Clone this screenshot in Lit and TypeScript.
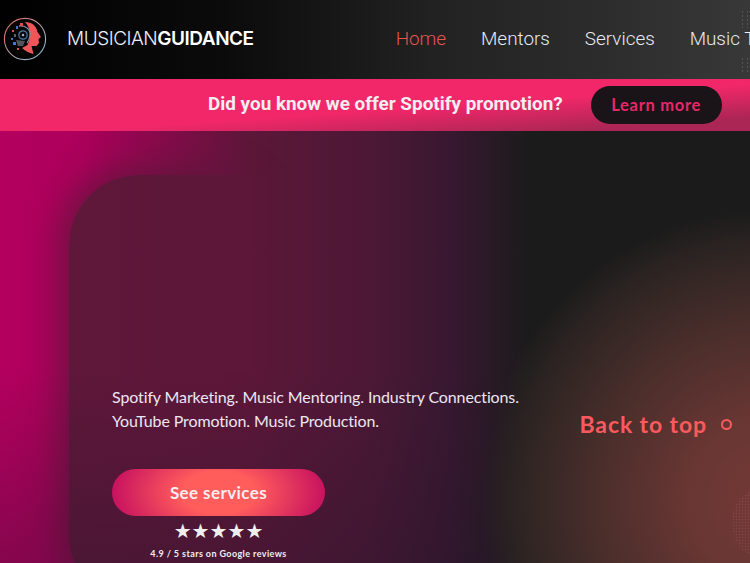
import {LitElement, html, css} from 'lit';
import {customElement} from 'lit/decorators.js';

const NAV = ['Home', 'Mentors', 'Services', 'Music Tools'];

@customElement('app-root')
export class AppRoot extends LitElement {
  static styles = css`
    :host {
      display: block;
      width: 750px;
      height: 563px;
      overflow: hidden;
      position: relative;
      background: #1b1b1b;
    }
    .header {
      position: relative;
      height: 77px;
      padding: 0 0 2px 3px;
      display: flex;
      align-items: center;
      white-space: nowrap;
      background: linear-gradient(90deg, #000 0%, #0b0b0b 30%, #222 58%, #2c2c2c 80%, #383838 100%);
    }
    .logo {
      width: 44px;
      height: 44px;
      flex: none;
    }
    .brand {
      margin-left: 20px;
      font: 300 19px 'Inter', sans-serif;
      letter-spacing: -0.48px;
      color: #e8eefc;
    }
    .brand b {
      font-weight: 600;
      color: #fff;
    }
    .nav {
      display: flex;
      gap: 34.9px;
      margin-left: 142px;
      font: 300 18.9px 'Roboto', sans-serif;
      color: #e6ebf5;
    }
    .nav .active {
      color: #e5564f;
    }
    .speck {
      position: absolute;
      left: 740px;
      width: 9px;
      opacity: 0.55;
      background-image: radial-gradient(circle, #6a6a6a 0.5px, transparent 0.9px);
      background-size: 5px 4px;
    }
    .speck.a {
      top: 10px;
      height: 18px;
    }
    .speck.b {
      top: 57px;
      height: 15px;
    }
    .banner {
      height: 52px;
      display: flex;
      align-items: center;
      padding-left: 208px;
      gap: 28px;
      white-space: nowrap;
      background: linear-gradient(176deg, #f2276a 55%, #ab2654 88%);
    }
    .banner-text {
      font: 700 18.9px 'Roboto', sans-serif;
      color: #f3eef0;
      margin-top: -3px;
    }
    .learn {
      width: 131px;
      height: 38px;
      margin-top: -1px;
      border-radius: 19px;
      display: flex;
      align-items: center;
      justify-content: center;
      background: #1a1419;
      color: #e8266a;
      font: 700 16.5px 'Lato', sans-serif;
      letter-spacing: 0.7px;
    }
    .hero {
      position: relative;
      height: 432px;
      overflow: hidden;
      background: linear-gradient(90deg, #b3005e 0, #ac005b 85px, #5c1739 250px, #4c1835 370px, #381830 450px, #1b1b1b 530px);
    }
    .shade {
      position: absolute;
      left: 69px;
      top: 44px;
      width: 200px;
      height: 430px;
      border-radius: 70px;
      box-shadow: -6px -4px 36px 2px rgba(92, 24, 58, 0.85);
    }
    .plum {
      position: absolute;
      left: 69px;
      top: 44px;
      width: 461px;
      height: 430px;
      border-radius: 70px;
      background: linear-gradient(90deg, #5f173a 0, #5c1739 181px, #4c1835 301px, #381830 381px, #1b1b1b 461px);
    }
    .fade {
      position: absolute;
      inset: 0;
      background: linear-gradient(180deg, transparent 55%, rgba(30, 20, 40, 0.3) 100%);
    }
    .glow {
      position: absolute;
      left: 470px;
      top: 69px;
      width: 600px;
      height: 600px;
      border-radius: 50%;
      background: radial-gradient(circle closest-side, #743936 0%, #683633 28%, #4a2e2b 58%, #2c2422 85%, rgba(27, 27, 27, 0) 97%);
    }
    .blob {
      position: absolute;
      left: 732px;
      top: 360px;
      width: 44px;
      height: 64px;
      border-radius: 50%;
      opacity: 0.6;
      background-image: radial-gradient(circle, #8a5058 0.7px, transparent 1.1px);
      background-size: 3px 3px;
    }
    .content {
      position: relative;
      padding: 254px 0 0 112px;
      width: 440px;
    }
    .lead {
      margin: 0;
      font: 400 16px/24px 'Lato', sans-serif;
      letter-spacing: -0.12px;
      color: #ece6f2;
    }
    .cta {
      width: 213px;
      height: 47px;
      margin-top: 36px;
      border-radius: 24px;
      display: flex;
      align-items: center;
      justify-content: center;
      background: radial-gradient(ellipse 50% 130% at 50% 50%, #ff5c5c 35%, #c8125f 100%);
      color: #f6eef0;
      font: 700 17px 'Lato', sans-serif;
      letter-spacing: 0.4px;
    }
    .rating {
      width: 213px;
      text-align: center;
      color: #efefef;
    }
    .stars {
      font: 400 20px/22px 'DejaVu Sans', sans-serif;
      margin-top: 4px;
    }
    .score {
      font: 700 9px/12px 'Lato', sans-serif;
      letter-spacing: 0.4px;
      margin-top: 6px;
    }
    .back {
      position: absolute;
      right: 18px;
      top: 279px;
      display: flex;
      align-items: center;
      gap: 14px;
      font: 700 23px 'Lato', sans-serif;
      letter-spacing: 0.9px;
      color: #fb5a5c;
    }
    .back i {
      width: 7px;
      height: 7px;
      border: 2px solid #fb5a5c;
      border-radius: 50%;
    }
  `;

  render() {
    return html`
      <div class="header">
        <svg class="logo" viewBox="0 0 44 44">
          <defs>
            <linearGradient id="ring" x1="0" y1="0" x2="1" y2="1">
              <stop offset="0" stop-color="#e8645c" />
              <stop offset="1" stop-color="#7fc4dc" />
            </linearGradient>
          </defs>
          <circle cx="22" cy="22" r="20.6" fill="#050505" stroke="url(#ring)" stroke-width="1.1" />
          <path d="M22 5 C29 5 33.5 9 34.5 15 L38 20 L35.5 22 L36 26 L33.5 29 L28.5 29 L30.5 37 C26 36 22 34 19 31 L24.5 28 C28 22 28 11 22 5Z" fill="#f0555a" />
          <path d="M16 9 C23 8 28 13 27 19 C26.5 22 25.5 24 24 26" fill="none" stroke="#7f90a4" stroke-width="1.3" />
          <circle cx="20" cy="18" r="4.2" fill="#0a0a0a" stroke="#4f7cab" stroke-width="1.2" />
          <circle cx="20" cy="18" r="1.2" fill="#9fb4c8" />
          <path d="M13 23 L22 24 L20 29 L15 29Z" fill="#4e545c" />
          <rect x="17" y="6" width="3" height="3" fill="#e04a50" />
          <rect x="13" y="9" width="2" height="3" fill="#3a7ad0" />
          <rect x="9" y="13" width="2" height="2" fill="#e04a50" />
          <rect x="11" y="17" width="2" height="3" fill="#56606a" />
          <rect x="8" y="21" width="2" height="2" fill="#3a7ad0" />
          <rect x="10" y="25" width="3" height="3" fill="#3a7ad0" />
          <rect x="14" y="31" width="2" height="2" fill="#e04a50" />
        </svg>
        <div class="brand">MUSICIAN<b>GUIDANCE</b></div>
        <nav class="nav">
          ${NAV.map((n, i) => html`<span class=${i === 0 ? 'active' : ''}>${n}</span>`)}
        </nav>
        <div class="speck a"></div>
        <div class="speck b"></div>
      </div>
      <div class="banner">
        <span class="banner-text">Did you know we offer Spotify promotion?</span>
        <div class="learn">Learn more</div>
      </div>
      <div class="hero">
        <div class="shade"></div>
        <div class="plum"></div>
        <div class="fade"></div>
        <div class="glow"></div>
        <div class="blob"></div>
        <div class="content">
          <p class="lead">Spotify Marketing. Music Mentoring. Industry Connections.<br />YouTube Promotion. Music Production.</p>
          <div class="cta">See services</div>
          <div class="rating">
            <div class="stars">★★★★★</div>
            <div class="score">4.9 / 5 stars on Google reviews</div>
          </div>
        </div>
        <div class="back">Back to top <i></i></div>
      </div>
    `;
  }
}
